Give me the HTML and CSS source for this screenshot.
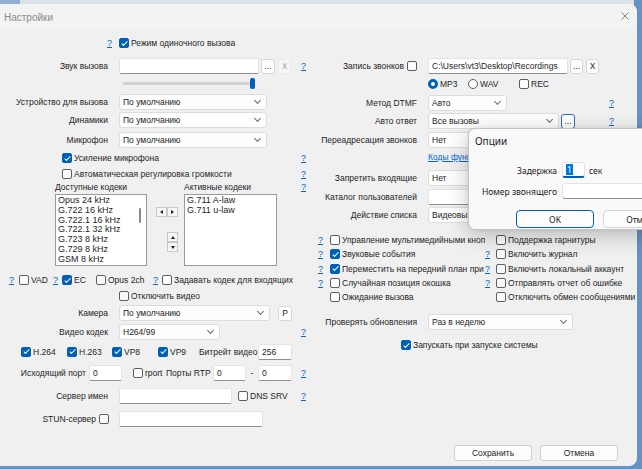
FILE: index.html
```
<!DOCTYPE html>
<html lang="ru">
<head>
<meta charset="utf-8">
<title>Настройки</title>
<link rel="stylesheet" href="styles.css">
</head>
<body>
<div class="behind"></div>
<div class="win">
  <div class="tb">
    <span class="tt">Настройки</span>
    <svg class="close" width="8" height="8" viewBox="0 0 8 8"><path d="M0.5 0.5L7.5 7.5M7.5 0.5L0.5 7.5" stroke="#8a8a8a" stroke-width="1"/></svg>
  </div>
  <div class="content">
    <div class="lc">
      <div class="row h12 mt7"><span class="lbl w112"><span class="q">?</span></span><span class="chk ml7"><span class="cb on"></span>Режим одиночного вызова</span></div>
      <div class="row h16 mt9"><span class="lbl">Звук вызова</span><span class="inp ml11 w140"></span><span class="btn ml2 w14">...</span><span class="btn btn-x ml3 w13">X</span><span class="q qr">?</span></div>
      <div class="row h12 mt3"><div class="slider"><span class="thumb"></span></div></div>
      <div class="row h16 mt5"><span class="lbl">Устройство для вызова</span><span class="sel ml11 w148">По умолчанию</span></div>
      <div class="row h16 mt2"><span class="lbl">Динамики</span><span class="sel ml11 w148">По умолчанию</span></div>
      <div class="row h16 mt4"><span class="lbl">Микрофон</span><span class="sel ml11 w148">По умолчанию</span></div>
      <div class="row h12 mt4"><span class="chk ml62"><span class="cb on"></span>Усиление микрофона</span><span class="q qr">?</span></div>
      <div class="row h12 mt4"><span class="chk ml62"><span class="cb"></span>Автоматическая регулировка громкости</span><span class="q qr">?</span></div>
      <div class="row h10 mt2"><span class="ml55 w129">Доступные кодеки</span><span>Активные кодеки</span><span class="q qr">?</span></div>
      <div class="codecs mt2">
        <div class="lb lb1">
          <div class="items">
            <div>Opus 24 kHz</div>
            <div>G.722 16 kHz</div>
            <div>G.722.1 16 kHz</div>
            <div>G.722.1 32 kHz</div>
            <div>G.723 8 kHz</div>
            <div>G.729 8 kHz</div>
            <div>GSM 8 kHz</div>
            <div>iLBC 8 kHz</div>
          </div>
          <div class="sb"><span class="sbt"></span></div>
        </div>
        <div class="arrows">
          <div class="pair-h"><span class="ab al"></span><span class="ab ar"></span></div>
          <div class="pair-v"><span class="ab au"></span><span class="ab ad"></span></div>
        </div>
        <div class="lb lb2">
          <div class="items">
            <div>G.711 A-law</div>
            <div>G.711 u-law</div>
          </div>
        </div>
      </div>
      <div class="row r9 h12 mt8">
        <span class="q pl9">?</span>
        <span class="chk"><span class="cb"></span>VAD</span>
        <span class="q">?</span>
        <span class="chk"><span class="cb on"></span>EC</span>
        <span class="chk"><span class="cb"></span>Opus 2ch</span>
        <span class="q">?</span>
        <span class="chk"><span class="cb"></span>Задавать кодек для входящих</span>
      </div>
      <div class="row h12 mt4"><span class="chk ml119"><span class="cb"></span>Отключить видео</span></div>
      <div class="row h16 mt3"><span class="lbl">Камера</span><span class="sel ml11 w151">По умолчанию</span><span class="btn ml8 w14">P</span></div>
      <div class="row h16 mt3"><span class="lbl">Видео кодек</span><span class="sel ml11 w101">H264/99</span><span class="q qr">?</span></div>
      <div class="row r13 h17 mt3">
        <span class="chk"><span class="cb on"></span>H.264</span>
        <span class="chk"><span class="cb on"></span>H.263</span>
        <span class="chk"><span class="cb on"></span>VP8</span>
        <span class="chk"><span class="cb on"></span>VP9</span>
        <span>Битрейт видео</span>
        <span class="inp h17 w34">256</span>
      </div>
      <div class="row h16 mt5"><span class="lbl w86">Исходящий порт</span><span class="inp ml3 w33">0</span><span class="chk ml11 w33"><span class="cb"></span>rport</span><span class="w47">Порты RTP</span><span class="inp w33">0</span><span class="w12 tc">-</span><span class="inp w34">0</span><span class="q qr">?</span></div>
      <div class="row h16 mt7"><span class="lbl">Сервер имен</span><span class="inp ml11 w113"></span><span class="chk ml6"><span class="cb"></span>DNS SRV</span><span class="q qr">?</span></div>
      <div class="row h16 mt7"><span class="lbl w96">STUN-сервер</span><span class="cb ml3"></span><span class="inp ml10 w144"></span></div>
    </div>
    <div class="rc">
      <div class="row h16 mt28"><span class="lbl rl lblc">Запись звонков<span class="cb ml3"></span></span><span class="inp ml11 w140">C:\Users\vt3\Desktop\Recordings</span><span class="btn ml2 w13">...</span><span class="btn ml3 w13">X</span></div>
      <div class="row r2 h12 mt4">
        <span class="chk"><span class="rb on"></span>MP3</span>
        <span class="chk"><span class="rb"></span>WAV</span>
        <span class="chk"><span class="cb"></span>REC</span>
      </div>
      <div class="row h16 mt5"><span class="lbl rl">Метод DTMF</span><span class="sel ml11 w79">Авто</span><span class="q qr2">?</span></div>
      <div class="row h16 mt2"><span class="lbl rl">Авто ответ</span><span class="sel ml11 w131">Все вызовы</span><span class="btn focus ml2 w14">...</span><span class="q qr2">?</span></div>
      <div class="row h16 mt3"><span class="lbl rl">Переадресация звонков</span><span class="sel ml11 w131">Нет</span></div>
      <div class="row h12 mt3"><span class="link ml116">Коды функций</span></div>
      <div class="row h16 mt7"><span class="lbl rl">Запретить входящие</span><span class="sel ml11 w131">Нет</span></div>
      <div class="row h17 mt2"><span class="lbl rl">Каталог пользователей</span><span class="inp h17 ml11 w131"></span></div>
      <div class="row h16 mt2"><span class="lbl rl">Действие списка</span><span class="sel ml11 w131">Видеовызов</span></div>
      <div class="opts mt10">
        <span class="q pl6">?</span><span class="chk clip"><span class="cb"></span>Управление мультимедийными кнопками</span><span></span><span class="chk"><span class="cb"></span>Поддержка гарнитуры</span>
        <span class="q pl6">?</span><span class="chk clip"><span class="cb on"></span>Звуковые события</span><span class="q">?</span><span class="chk"><span class="cb"></span>Включить журнал</span>
        <span class="q pl6">?</span><span class="chk clip"><span class="cb on"></span>Переместить на передний план при вызове</span><span class="q">?</span><span class="chk"><span class="cb"></span>Включить локальный аккаунт</span>
        <span class="q pl6">?</span><span class="chk clip"><span class="cb"></span>Случайная позиция окошка</span><span class="q">?</span><span class="chk"><span class="cb"></span>Отправлять отчет об ошибке</span>
        <span></span><span class="chk clip"><span class="cb"></span>Ожидание вызова</span><span></span><span class="chk"><span class="cb"></span>Отключить обмен сообщениями</span>
      </div>
      <div class="row h16 mt10"><span class="lbl rl">Проверять обновления</span><span class="sel ml11 w145">Раз в неделю</span></div>
      <div class="row h12 mt9"><span class="chk ml89"><span class="cb on"></span>Запускать при запуске системы</span></div>
    </div>
  </div>
  <div class="foot">
    <span class="btn fbtn">Сохранить</span>
    <span class="btn fbtn">Отмена</span>
  </div>
</div>
<div class="dlg">
  <div class="dlg-t">Опции</div>
  <div class="row h16 mt9"><span class="dlbl">Задержка</span><span class="dinp ml5 w23"><span class="hl">1</span></span><span class="ml4">сек</span></div>
  <div class="row h16 mt5"><span class="dlbl">Номер звонящего</span><span class="dinp2 ml5 w110"></span></div>
  <div class="row h18 mt11"><span class="dbtn def ml47">OK</span><span class="dbtn ml9">Отмена</span></div>
</div>
</body>
</html>
```
FILE: styles.css
```
*{box-sizing:border-box}
html,body{margin:0;padding:0}
body{width:642px;height:469px;overflow:hidden;position:relative;background:#6593c2;font-family:"Liberation Sans",Arial,sans-serif;font-size:8.5px;color:#1e1e1e}
.behind{position:absolute;left:0;top:0;width:634px;height:10px;background:linear-gradient(to right,#8fb0d2 0 20px,#dde2e8 20px)}
.win{position:absolute;left:0;top:4px;width:637px;height:462px;background:#f0f0f0;border-radius:0 8px 8px 0;display:flex;flex-direction:column}
.tb{height:26px;display:flex;align-items:center;padding:0 8px 0 4px;background:#f3f3f3;border-radius:0 8px 0 0}
.tt{font-size:10px;color:#8a8a8a}
.close{margin-left:auto;margin-top:-3px}
.content{display:flex}
.lc{width:312px;flex:none}
.rc{width:324px;flex:none}
.row{display:flex;align-items:center;white-space:nowrap}
.h10{height:10px}.h12{height:12px}.h16{height:16px}.h17{height:17px}.h18{height:18px}
.mt2{margin-top:2px}.mt3{margin-top:3px}.mt4{margin-top:4px}.mt5{margin-top:5px}.mt7{margin-top:7px}.mt8{margin-top:8px}.mt9{margin-top:9px}.mt10{margin-top:10px}.mt11{margin-top:11px}.mt28{margin-top:28px}
.ml2{margin-left:2px}.ml3{margin-left:3px}.ml4{margin-left:4px}.ml5{margin-left:5px}.ml6{margin-left:6px}.ml7{margin-left:7px}.ml8{margin-left:8px}.ml9{margin-left:9px}.ml10{margin-left:10px}.ml11{margin-left:11px}.ml47{margin-left:47px}.ml55{margin-left:55px}.ml62{margin-left:62px}.ml89{margin-left:89px}.ml116{margin-left:116px}.ml119{margin-left:119px}
.pl6{padding-left:6px}.pl9{padding-left:9px}
.w12{width:12px}.w13{width:13px}.w14{width:14px}.w23{width:23px}.w33{width:33px}.w34{width:34px}.w47{width:47px}.w79{width:79px}.w86{width:86px}.w96{width:96px}.w101{width:101px}.w110{width:110px}.w112{width:112px}.w113{width:113px}.w129{width:129px}.w131{width:131px}.w140{width:140px}.w144{width:144px}.w145{width:145px}.w148{width:148px}.w151{width:151px}
.tc{text-align:center}
.lbl{width:108px;flex:none;text-align:right}
.lbl.w86{width:86px}.lbl.w96{width:96px}.lbl.w112{width:112px}
.lbl.rl{width:105px}
.lblc{display:flex;align-items:center;justify-content:flex-end}
.q{color:#0066cc;text-decoration:underline;flex:none;font-size:9px}
.qr{margin-left:auto;width:13px;text-align:center;margin-right:2px}
.qr2{margin-left:auto;width:13px;text-align:center;margin-right:18px}
.link{color:#0066cc;text-decoration:underline}
.chk{display:flex;align-items:center;gap:2px;flex:none}
.cb{position:relative;display:inline-block;width:10px;height:10px;border:1px solid #5e5e5e;border-radius:2px;background:#fbfbfb;flex:none}
.cb.on{background:#005fb8;border-color:#005fb8}
.cb.on::after{content:"";position:absolute;left:2.6px;top:0.6px;width:2.4px;height:5px;border:solid #fff;border-width:0 1.2px 1.2px 0;transform:rotate(45deg)}
.rb{display:inline-block;width:10px;height:10px;border:1px solid #5e5e5e;border-radius:50%;background:#fbfbfb;flex:none}
.rb.on{border:3px solid #005fb8;background:#fff}
.inp{display:flex;align-items:center;height:16px;background:#fff;border:1px solid #e3e3e3;border-bottom-color:#8f8f8f;border-radius:2px;padding-left:3px;flex:none;overflow:hidden}
.sel{display:flex;align-items:center;height:16px;background:#fdfdfd;border:1px solid #dcdcdc;border-radius:3px;padding-left:3px;flex:none;overflow:hidden}
.sel::after{content:"";width:4px;height:4px;border-right:1px solid #6a6a6a;border-bottom:1px solid #6a6a6a;transform:rotate(45deg);margin-left:auto;margin-right:6px;margin-top:-3px}
.btn{display:flex;align-items:center;justify-content:center;height:15px;background:#fdfdfd;border:1px solid #d6d6d6;border-radius:3px;flex:none;color:#1b1b1b}
.btn-x{background:#f7f7f7;border-color:#ececec;color:#a0a0a0}
.btn.focus{border:1px solid #2a6fb8;box-shadow:inset 0 0 0 1px #fff}
.slider{margin-left:123px;width:132px;height:12px;display:flex;align-items:center;background:linear-gradient(#d2d2d2,#d2d2d2) center/100% 3px no-repeat}
.thumb{margin-left:127px;width:5px;height:11px;background:#005fb8;border-radius:2px}
.codecs{display:flex;height:72px}
.lb{height:72px;background:#fff;border:1px solid #9a9a9a;overflow:hidden;flex:none}
.lb1{margin-left:55px;width:92px;display:flex}
.lb2{width:93px}
.items{flex:1;padding:1px 0 0 2px;line-height:9.8px;font-size:9px}
.sb{width:9px;flex:none}
.sbt{display:block;width:2px;height:15px;margin:13px 0 0 2px;background:#8a8a8a;border-radius:1px}
.arrows{width:37px;flex:none}
.pair-h{display:flex;margin:13px 0 0 9px}
.pair-v{display:flex;flex-direction:column;margin:15px 0 0 20px}
.ab{position:relative;display:flex;align-items:center;justify-content:center;width:11px;height:10px;border:1px solid #c8c8c8;background:#f6f6f6}
.ab::after{content:"";width:0;height:0}
.al::after{border-right:3px solid #222;border-top:2.5px solid transparent;border-bottom:2.5px solid transparent}
.ar::after{border-left:3px solid #222;border-top:2.5px solid transparent;border-bottom:2.5px solid transparent}
.au::after{border-bottom:3px solid #222;border-left:2.5px solid transparent;border-right:2.5px solid transparent}
.ad::after{border-top:3px solid #222;border-left:2.5px solid transparent;border-right:2.5px solid transparent}
.r9{display:grid;grid-template-columns:19px 34px 9px 34px 57px 9px auto;align-items:center}
.r13{display:grid;grid-template-columns:46px 45px 46px 41px 59px 34px;align-items:center;padding-left:21px}
.r2{display:grid;grid-template-columns:40px 51px auto;align-items:center;padding-left:116px}
.opts{display:grid;grid-template-columns:18px 155px 11px auto;grid-auto-rows:14.3px;align-items:center;white-space:nowrap}
.clip{overflow:hidden}
.foot{margin-top:auto;display:flex;justify-content:flex-end;gap:8px;padding:0 19px 5px 0}
.fbtn{width:78px;height:16px;border-color:#d0d0d0;background:#fdfdfd}
.dlg{position:absolute;left:468px;top:128px;width:190px;height:102px;background:#f9f9f9;border:1px solid #c4c4c4;border-radius:7px 0 0 7px;box-shadow:0 6px 22px rgba(0,0,0,.22),0 0 4px rgba(0,0,0,.08);font-family:"Noto Sans","Liberation Sans",sans-serif;font-size:8.5px;color:#1b1b1b}
.dlg-t{height:24px;display:flex;align-items:center;padding-left:6px;font-size:10px}
.dlbl{width:88px;text-align:right;flex:none}
.dinp{display:flex;align-items:center;height:16px;background:#fff;border:1px solid #e3e3e3;border-bottom:2px solid #005fb8;border-radius:3px;padding-left:3px;flex:none}
.dinp2{display:flex;height:16px;background:#fff;border:1px solid #e3e3e3;border-bottom-color:#8f8f8f;border-radius:3px;flex:none}
.hl{background:#0078d4;color:#fff;padding:0 1px;line-height:11px}
.dbtn{display:flex;align-items:center;justify-content:center;width:78px;height:18px;background:#fdfdfd;border:1px solid #d4d4d4;border-radius:4px;flex:none}
.dbtn.def{border:1px solid #005fb8;box-shadow:inset 0 0 0 1px #fff}
```
